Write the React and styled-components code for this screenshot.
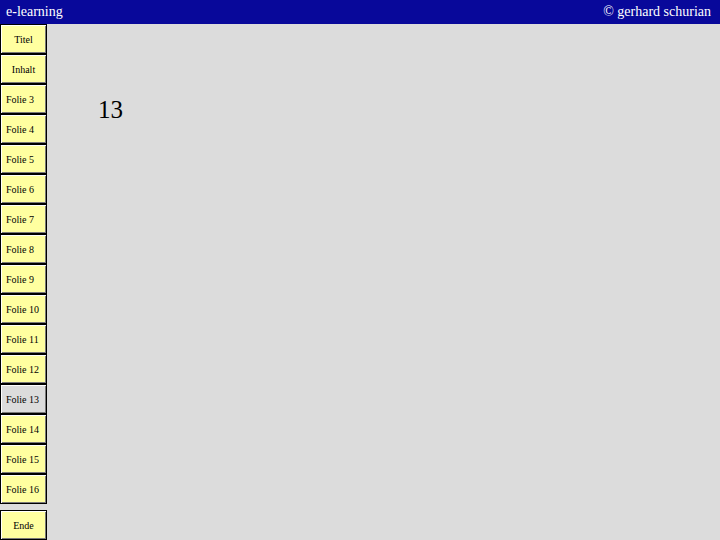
import styled, { createGlobalStyle } from 'styled-components'

const GlobalStyle = createGlobalStyle`
  html, body {
    margin: 0;
    padding: 0;
    background: #dcdcdc;
    font-family: "Liberation Serif", "Times New Roman", serif;
  }
`;

const Page = styled.div`
  width: 720px;
  height: 540px;
  display: flex;
  flex-direction: column;
  overflow: hidden;
`;

const Header = styled.div`
  height: 24px;
  background-color: #08089a;
  color: #ffffff;
  display: flex;
  justify-content: space-between;
  align-items: center;
  padding: 0 9px 0 6px;
  font-size: 14px;
  line-height: 24px;
`;

const Body = styled.div`
  flex: 1;
  display: flex;
`;

const Nav = styled.div`
  width: 49px;
  display: flex;
  flex-direction: column;
`;

const NavButton = styled.div`
  width: 47px;
  height: 30px;
  box-sizing: border-box;
  border: 1px solid #000;
  box-shadow: inset 1px 1px #ffffff, inset -1px -1px #7a7a7a;
  background-color: ${p => (p.$active ? '#dcdcdc' : '#ffffa0')};
  display: flex;
  align-items: center;
  justify-content: ${p => (p.$center ? 'center' : 'flex-start')};
  padding-left: ${p => (p.$center ? '0' : '5px')};
  font-size: 10px;
  color: #000;
  cursor: pointer;
`;

const Spacer = styled.div`
  flex: 1;
`;

const Content = styled.div`
  flex: 1;
  padding: 72px 0 0 49px;
`;

const SlideNumber = styled.div`
  font-size: 25px;
`;

const slides = [];
for (let i = 3; i <= 16; i++) slides.push(i);

export default function App() {
  const current = 13;
  return (
    <Page>
      <GlobalStyle />
      <Header>
        <span>e-learning</span>
        <span>© gerhard schurian</span>
      </Header>
      <Body>
        <Nav>
          <NavButton $center>Titel</NavButton>
          <NavButton $center>Inhalt</NavButton>
          {slides.map(n => (
            <NavButton key={n} $active={n === current}>Folie {n}</NavButton>
          ))}
          <Spacer />
          <NavButton $center>Ende</NavButton>
        </Nav>
        <Content>
          <SlideNumber>{current}</SlideNumber>
        </Content>
      </Body>
    </Page>
  )
}
